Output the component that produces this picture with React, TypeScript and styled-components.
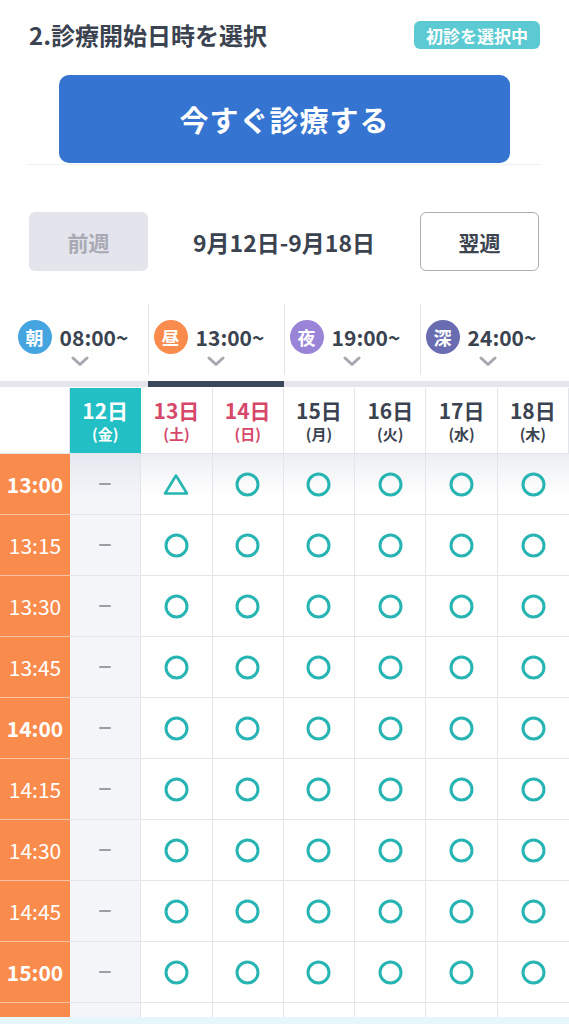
import React from "react";
import styled, { createGlobalStyle } from "styled-components";

const kText = "#3b4350";
const kBlue = "#3574d0";
const kTeal = "#22bfc4";
const kMark = "#27b4b3";
const kOrange = "#f98b4d";
const kLine = "#e3e5eb";
const kRed = "#d6486a";

const GlobalStyle = createGlobalStyle`
  html, body {
    margin: 0;
    padding: 0;
    background: #ffffff;
    overflow: hidden;
  }
  body {
    font-family: "Noto Sans CJK JP", "Noto Sans", sans-serif;
    color: ${kText};
  }
`;

const Page = styled.div`
  display: flex;
  flex-direction: column;
  height: 100vh;
  overflow: hidden;
`;

const TitleRow = styled.div`
  display: flex;
  align-items: center;
  justify-content: space-between;
  padding: 20px 29px 0 29px;
  height: 30px;
`;

const Title = styled.h2`
  margin: 0;
  font-size: 24px;
  font-weight: 700;
  line-height: 30px;
  color: ${kText};
`;

const Badge = styled.span`
  display: inline-flex;
  align-items: center;
  height: 28px;
  padding: 0 12px;
  border-radius: 6px;
  background: #5ccad2;
  color: #ffffff;
  font-size: 17px;
  font-weight: 700;
`;

const NowArea = styled.div`
  margin: 25px 28px 0;
  padding-bottom: 1px;
  border-bottom: 1px solid #eef0f4;
  display: flex;
  justify-content: center;
`;

const NowButton = styled.button`
  width: 451px;
  height: 88px;
  border: none;
  border-radius: 10px;
  background: ${kBlue};
  color: #ffffff;
  font-family: inherit;
  font-size: 29px;
  font-weight: 700;
  letter-spacing: 1px;
  cursor: pointer;
`;

const WeekNav = styled.div`
  display: flex;
  align-items: center;
  justify-content: space-between;
  margin-top: 47px;
  padding: 0 30px 0 29px;
`;

const WeekButton = styled.button<{ $disabled?: boolean }>`
  width: 119px;
  height: 59px;
  border-radius: 6px;
  font-family: inherit;
  font-size: 21px;
  font-weight: 700;
  cursor: pointer;
  background: ${(p) => (p.$disabled ? "#e3e4ec" : "#ffffff")};
  color: ${(p) => (p.$disabled ? "#a7a9b4" : kText)};
  border: ${(p) => (p.$disabled ? "none" : "1.5px solid #abadb4")};
`;

const WeekRange = styled.div`
  font-size: 23px;
  font-weight: 700;
  color: ${kText};
`;

const TabStrip = styled.div`
  display: flex;
  margin-top: 32px;
  padding-left: 12px;
  box-shadow: inset 0 -6px 0 #e4e5ee;
`;

const Tab = styled.div<{ $active?: boolean; $divider?: boolean }>`
  width: 136px;
  height: 78px;
  display: flex;
  flex-direction: column;
  align-items: center;
  border-bottom: 6px solid ${(p) => (p.$active ? "#3c4757" : "transparent")};
  background-image: ${(p) =>
    p.$divider ? "linear-gradient(#e3e4e9, #e3e4e9)" : "none"};
  background-size: 1px 71px;
  background-position: 0 1px;
  background-repeat: no-repeat;
`;

const TabLabel = styled.div`
  display: flex;
  align-items: center;
  gap: 8px;
  margin-top: 17px;
  padding-right: 14px;
`;

const TabIcon = styled.span<{ $color: string }>`
  display: inline-flex;
  align-items: center;
  justify-content: center;
  width: 34px;
  height: 34px;
  border-radius: 50%;
  background: ${(p) => p.$color};
  color: #ffffff;
  font-size: 18px;
  font-weight: 700;
`;

const TabTime = styled.span`
  font-size: 21px;
  font-weight: 700;
  color: ${kText};
`;

const Chevron = styled.svg`
  margin-top: 2px;
`;

const TableArea = styled.div`
  flex: 1;
  overflow: hidden;
  margin-top: 1px;
`;

const Grid = styled.div`
  display: grid;
  grid-template-columns: 70px repeat(7, 1fr);
  grid-auto-rows: 61px;
  grid-template-rows: 66px;
`;

const HeadCell = styled.div<{ $kind: string }>`
  display: flex;
  flex-direction: column;
  align-items: center;
  justify-content: center;
  border-right: 1px solid ${(p) => (p.$kind === "today" ? kTeal : kLine)};
  border-bottom: 1px solid ${kLine};
  background: ${(p) => (p.$kind === "today" ? kTeal : "#ffffff")};
  color: ${(p) =>
    p.$kind === "today" ? "#ffffff" : p.$kind === "holiday" ? kRed : kText};
  font-weight: 700;

  &:last-child {
    border-right: none;
  }
`;

const HeadDay = styled.span`
  font-size: 21px;
  line-height: 25px;
`;

const HeadWeek = styled.span`
  font-size: 15px;
  line-height: 21px;
`;

const TimeCell = styled.div<{ $strong?: boolean }>`
  display: flex;
  align-items: center;
  justify-content: center;
  background: ${kOrange};
  border-bottom: 1px solid #fbc3a2;
  color: #ffffff;
  font-size: 21px;
  font-weight: ${(p) => (p.$strong ? 700 : 400)};
`;

const SlotCell = styled.div<{ $closed?: boolean; $shaded?: boolean }>`
  display: flex;
  align-items: center;
  justify-content: center;
  border-right: 1px solid ${kLine};
  border-bottom: 1px solid ${kLine};
  background-color: ${(p) => (p.$closed ? "#f4f5f9" : "#ffffff")};
  background-image: ${(p) =>
    p.$shaded
      ? "linear-gradient(to bottom, rgba(200, 204, 218, 0.32), rgba(255, 255, 255, 0) 70%)"
      : "none"};

  &:nth-child(8n) {
    border-right: none;
  }
`;

const Dash = styled.span`
  width: 12px;
  height: 2px;
  border-radius: 1px;
  background: #9c9ea6;
`;

const Footer = styled.div`
  height: 7px;
  background: #e7f6fa;
`;

const tabs = [
  { mark: "朝", time: "08:00~", color: "#45a5e1" },
  { mark: "昼", time: "13:00~", color: kOrange, active: true },
  { mark: "夜", time: "19:00~", color: "#9a84d8" },
  { mark: "深", time: "24:00~", color: "#6a6cb2" },
];

const days = [
  { day: "12日", week: "(金)", kind: "today" },
  { day: "13日", week: "(土)", kind: "holiday" },
  { day: "14日", week: "(日)", kind: "holiday" },
  { day: "15日", week: "(月)", kind: "normal" },
  { day: "16日", week: "(火)", kind: "normal" },
  { day: "17日", week: "(水)", kind: "normal" },
  { day: "18日", week: "(木)", kind: "normal" },
];

const times = [
  "13:00", "13:15", "13:30", "13:45", "14:00",
  "14:15", "14:30", "14:45", "15:00", "15:15",
];

function CircleMark() {
  return (
    <svg width="25" height="25" viewBox="0 0 25 25">
      <circle cx="12.5" cy="12.5" r="10.5" fill="none" stroke={kMark} strokeWidth="3" />
    </svg>
  );
}

function TriangleMark() {
  return (
    <svg width="26" height="23" viewBox="0 0 26 23">
      <path d="M13 2.5 L24 20.5 L2 20.5 Z" fill="none" stroke={kMark} strokeWidth="2.6" strokeLinejoin="round" />
    </svg>
  );
}

export default function App() {
  return (
    <Page>
      <GlobalStyle />
      <TitleRow>
        <Title>2.診療開始日時を選択</Title>
        <Badge>初診を選択中</Badge>
      </TitleRow>

      <NowArea>
        <NowButton>今すぐ診療する</NowButton>
      </NowArea>

      <WeekNav>
        <WeekButton $disabled>前週</WeekButton>
        <WeekRange>9月12日-9月18日</WeekRange>
        <WeekButton>翌週</WeekButton>
      </WeekNav>

      <TabStrip>
        {tabs.map((t, i) => (
          <Tab key={t.mark} $active={t.active} $divider={i > 0}>
            <TabLabel>
              <TabIcon $color={t.color}>{t.mark}</TabIcon>
              <TabTime>{t.time}</TabTime>
            </TabLabel>
            <Chevron width="18" height="11" viewBox="0 0 18 11">
              <path d="M2 2 L9 8.5 L16 2" fill="none" stroke="#a6a8b0" strokeWidth="3" strokeLinecap="round" strokeLinejoin="round" />
            </Chevron>
          </Tab>
        ))}
      </TabStrip>

      <TableArea>
        <Grid>
          <HeadCell $kind="blank" />
          {days.map((d) => (
            <HeadCell key={d.day} $kind={d.kind}>
              <HeadDay>{d.day}</HeadDay>
              <HeadWeek>{d.week}</HeadWeek>
            </HeadCell>
          ))}
          {times.map((time, r) => (
            <React.Fragment key={time}>
              <TimeCell $strong={time.endsWith(":00")}>{time}</TimeCell>
              {days.map((d, c) => (
                <SlotCell key={d.day} $closed={c === 0} $shaded={r === 0}>
                  {c === 0 ? <Dash /> : r === 0 && c === 1 ? <TriangleMark /> : <CircleMark />}
                </SlotCell>
              ))}
            </React.Fragment>
          ))}
        </Grid>
      </TableArea>

      <Footer />
    </Page>
  );
}
